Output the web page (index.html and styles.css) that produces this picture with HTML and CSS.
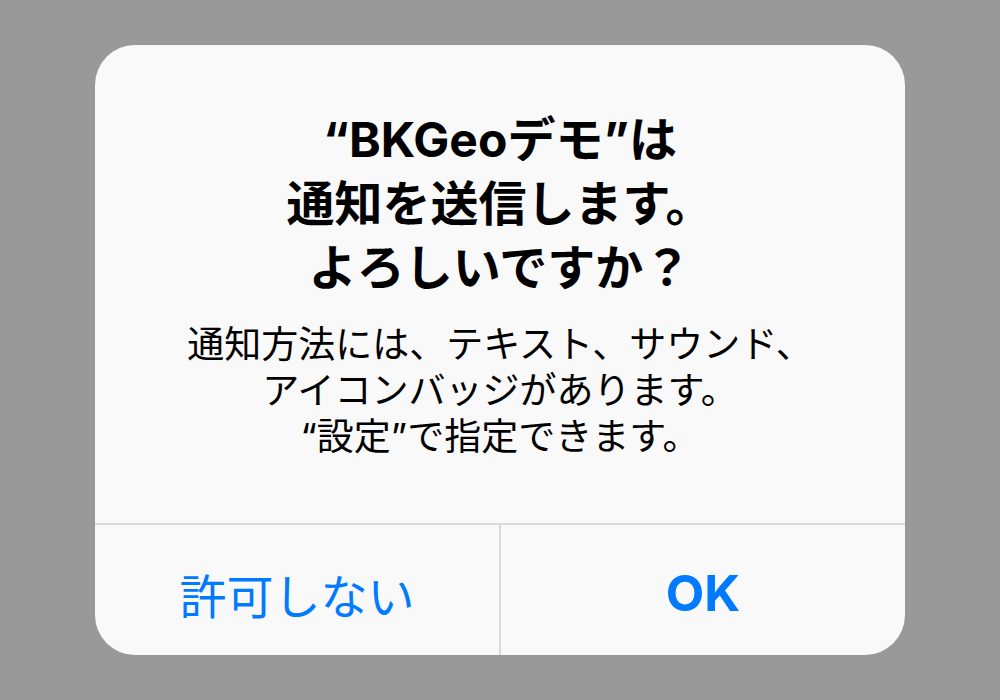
FILE: index.html
```html
<!DOCTYPE html>
<html lang="ja">
<head>
<meta charset="utf-8">
<link rel="stylesheet" href="styles.css">
</head>
<body>
<div class="screen">
  <div class="alert">
    <div class="content">
      <div class="title">“BKGeoデモ”は<br>通知を送信します。<br>よろしいですか？</div>
      <div class="message">通知方法には、テキスト、サウンド、<br>アイコンバッジがあります。<br>“設定”で指定できます。</div>
    </div>
    <div class="actions">
      <div class="btn">許可しない</div>
      <div class="btn primary">OK</div>
    </div>
  </div>
</div>
</body>
</html>
```
FILE: styles.css
```css
html, body {
  margin: 0;
  padding: 0;
}
body {
  background: #999999;
  font-family: Inter, "Noto Sans CJK JP", sans-serif;
}
.screen {
  width: 1000px;
  height: 700px;
  display: flex;
  align-items: center;
  justify-content: center;
}
.alert {
  width: 810px;
  height: 610px;
  background: #f9f9f9;
  border-radius: 40px;
  overflow: hidden;
  display: flex;
  flex-direction: column;
}
.content {
  flex: 1;
  padding: 63px 20px 0;
  text-align: center;
  color: #000;
}
.title {
  font-size: 48px;
  line-height: 64px;
  font-weight: 700;
}
.message {
  margin-top: 22px;
  font-size: 37px;
  line-height: 46px;
  font-weight: 400;
}
.actions {
  height: 130px;
  border-top: 2px solid #dadade;
  display: flex;
}
.btn {
  flex: 1;
  display: flex;
  align-items: center;
  justify-content: center;
  padding-top: 6px;
  font-size: 47px;
  color: #007aff;
}
.btn + .btn {
  border-left: 2px solid #dadade;
}
.primary {
  font-size: 50px;
  font-weight: 700;
}
```
